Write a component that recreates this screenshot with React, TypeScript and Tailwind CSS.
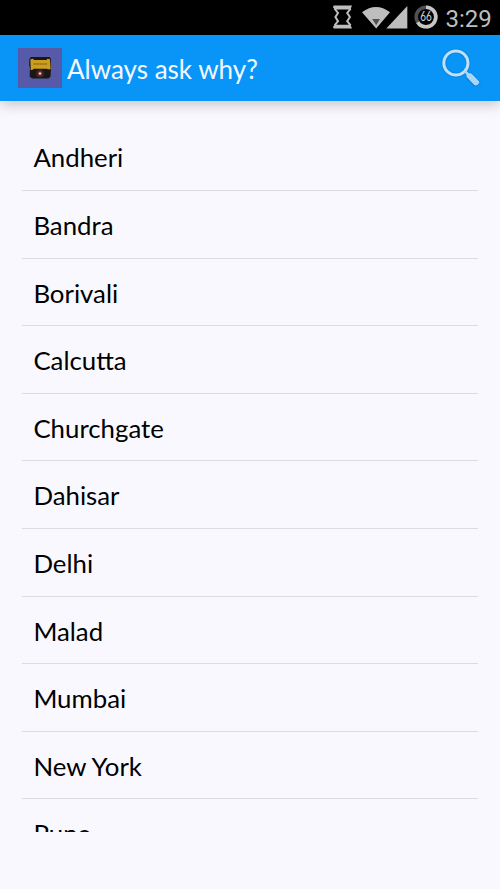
const places = [
  "Andheri",
  "Bandra",
  "Borivali",
  "Calcutta",
  "Churchgate",
  "Dahisar",
  "Delhi",
  "Malad",
  "Mumbai",
  "New York",
  "Pune",
];

function StatusIcons() {
  return (
    <svg width="80" height="35" viewBox="0 0 80 35" fill="#bebebe">
      {/* rotation */}
      <path d="M3.6 5.4H22L20.4 9.4H5L3 7.6ZM5 24.8H20.4L22 28.6H3.6L3 26.6Z" />
      <path
        d="M4.6 8.6 8 13 5.4 17 8 21.2 4.6 25.4M20.6 8.6 17.2 13 19.9 17 17.2 21.2 20.6 25.4"
        fill="none"
        stroke="#bebebe"
        strokeWidth="2"
      />
      {/* wifi */}
      <path d="M32 12.2Q46 1.6 60 12.2L46.2 28.6Z" />
      <path d="M42.2 18.9H50L46.2 25.3Z" fill="#505050" />
      {/* signal */}
      <path d="M56.3 28.5H77.3V6Z" />
    </svg>
  );
}

function Battery({ level }: { level: number }) {
  return (
    <svg width="26" height="35" viewBox="0 0 26 35">
      <circle cx="13" cy="17" r="9.8" fill="none" stroke="#505050" strokeWidth="3.6" />
      <circle
        cx="13"
        cy="17"
        r="9.8"
        fill="none"
        stroke="#c6c6c6"
        strokeWidth="3.6"
        pathLength="100"
        strokeDasharray={`${level} 100`}
        transform="rotate(-90 13 17)"
      />
      <text
        x="13"
        y="21.2"
        textAnchor="middle"
        fill="#d0d0d0"
        textLength="11.5"
        lengthAdjust="spacingAndGlyphs"
        className="font-['Lato',sans-serif] text-[12.5px]"
      >
        {level}
      </text>
    </svg>
  );
}

function StatusBar() {
  return (
    <div className="flex h-[35px] items-center bg-black pl-[330px]">
      <StatusIcons />
      <div className="ml-[2.5px]">
        <Battery level={66} />
      </div>
      <span className="ml-[7px] pt-[2px] font-['Roboto',sans-serif] text-[24px] leading-none text-[#bebebe]">
        3:29
      </span>
    </div>
  );
}

function AppIcon() {
  return (
    <svg width="44" height="40" viewBox="0 0 44 40">
      <rect width="44" height="40" fill="#575aa8" />
      <path
        d="M13 9H31.5L33 11V20L32.6 28.5 30.5 30.5H14L11.6 28.5 12 20 11.3 18V11Z"
        fill="#1b1718"
      />
      <path d="M12.4 11.3 15 10.8 16 12H28.5L29.5 10.8 32 11.3 32.6 21.3H30L28.8 20.7H15.5L14.5 22H12.8Z" fill="#cb9f1e" />
      <path d="M15.5 16H29" stroke="#a07a16" strokeWidth="2" strokeDasharray="2.4 .5" />
      <circle cx="22" cy="25.5" r="4" fill="#3e2424" />
      <circle cx="22" cy="25.5" r="2" fill="#954c48" />
      <circle cx="22" cy="25.5" r="1" fill="#ffe0d8" />
    </svg>
  );
}

function SearchIcon() {
  return (
    <svg width="42" height="42" viewBox="0 0 42 42">
      <g fill="none" stroke="#0872c2" strokeOpacity=".45" strokeLinejoin="round">
        <circle cx="15.9" cy="16" r="12.1" strokeWidth="4.8" />
        <path d="M24 24 26.2 27.2 26.2 30.2 33.8 38.2Q37.4 39 39.8 35.4L31.6 26.6 28.7 26.2 25.6 23" strokeWidth="2" />
      </g>
      <circle cx="15.9" cy="16" r="12.1" fill="none" stroke="#bde0fb" strokeWidth="3" />
      <path
        d="M24 25 25.6 23.2 28.6 26 31.4 26.4 39 34.2Q40 35.4 38.7 36.8L37.6 37.8Q35.8 39 34.1 37.7L26.6 30 26.4 27.4Z"
        fill="#a8d6fa"
      />
    </svg>
  );
}

export default function App() {
  return (
    <div className="h-[889px] w-[500px] overflow-hidden bg-[#f9f8ff] font-['Lato',sans-serif]">
      <StatusBar />
      <header className="flex h-[66px] items-center bg-[#0995f7] pl-[17.5px] pr-[18px] shadow-[0_2px_14px_rgba(0,0,0,0.25)]">
        <AppIcon />
        <h1 className="ml-[5.5px] flex-1 pt-[2px] text-[26px] leading-[34px] text-[#f4f8ff]">
          Always ask why?
        </h1>
        <SearchIcon />
      </header>
      <ul className="mx-[22px] mt-[22.4px] h-[709px] overflow-hidden">
        {places.map((place) => (
          <li
            key={place}
            className="flex h-[67.62px] items-center border-b border-[#dddce2] pl-[11.4px] pt-[1.4px] text-[25.8px] leading-[34px] text-black"
          >
            {place}
          </li>
        ))}
      </ul>
    </div>
  );
}
